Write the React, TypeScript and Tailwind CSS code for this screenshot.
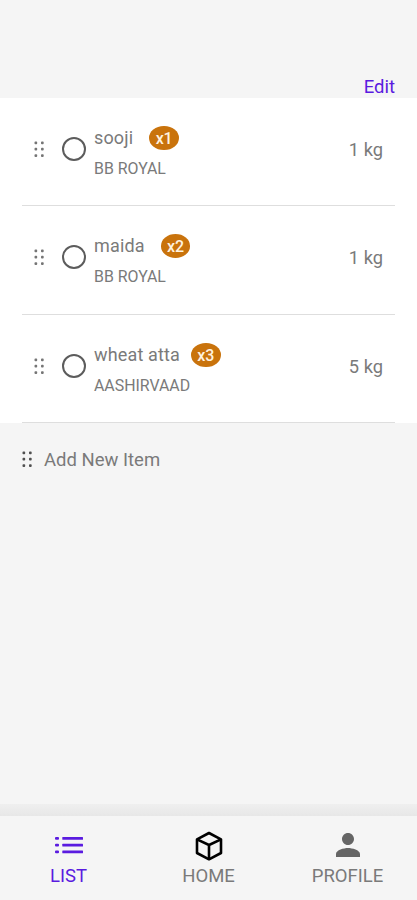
import React from "react";

interface GroceryItem {
  id: number;
  name: string;
  brand: string;
  count: number;
  quantity: string;
}

const items: GroceryItem[] = [
  { id: 1, name: "sooji", brand: "BB ROYAL", count: 1, quantity: "1 kg" },
  { id: 2, name: "maida", brand: "BB ROYAL", count: 2, quantity: "1 kg" },
  { id: 3, name: "wheat atta", brand: "AASHIRVAAD", count: 3, quantity: "5 kg" },
];

const DragHandle: React.FC<{ className?: string }> = ({ className }) => (
  <svg viewBox="0 0 12 18" className={`h-[18px] w-3 shrink-0 ${className ?? ""}`} fill="currentColor">
    {[1.5, 8].map((x) =>
      [1.5, 7.8, 14.2].map((y) => (
        <rect key={`${x}-${y}`} x={x} y={y} width="2.7" height="2.7" rx="0.9" />
      ))
    )}
  </svg>
);

const ListIcon: React.FC = () => (
  <svg viewBox="0 0 28 18" className="h-[18px] w-7" fill="currentColor">
    {[1, 7.8, 14.5].map((y) => (
      <g key={y}>
        <rect x="0" y={y} width="4" height="2.8" rx="1" />
        <rect x="7.3" y={y} width="20.7" height="2.8" rx="0.5" />
      </g>
    ))}
  </svg>
);

const BoxIcon: React.FC = () => (
  <svg
    viewBox="0 0 28 30"
    className="h-[30px] w-7"
    fill="none"
    stroke="currentColor"
    strokeWidth="2.6"
    strokeLinejoin="round"
  >
    <path d="M14 2 L26 8.3 V22 L14 28.3 L2 22 V8.3 Z" />
    <path d="M2 8.3 L14 14 L26 8.3 M14 14 V28" />
  </svg>
);

const PersonIcon: React.FC = () => (
  <svg viewBox="4 4 16 16" className="h-6 w-6" fill="currentColor">
    <path d="M12 12c2.21 0 4-1.79 4-4s-1.79-4-4-4-4 1.79-4 4 1.79 4 4 4zm0 2c-2.67 0-8 1.34-8 4v2h16v-2c0-2.66-5.33-4-8-4z" />
  </svg>
);

const ItemRow: React.FC<{ item: GroceryItem }> = ({ item }) => (
  <li className="ml-[22px] mr-[22px] flex h-[108.4px] border-b-[1.5px] border-[#dedede] pl-[11px] pr-3">
    <DragHandle className="mt-[42px] text-[#757575]" />
    <button
      aria-label={`Mark ${item.name}`}
      className="ml-[17px] mt-[39px] h-6 w-6 shrink-0 rounded-full border-[2.3px] border-[#5c5c5c]"
    />
    <div className="ml-2 mt-7">
      <div className="flex h-6 items-center">
        <span className="text-[18px] leading-6 tracking-[0.15px]">{item.name}</span>
        <span
          className={`flex h-6 w-[29.5px] items-center justify-center rounded-[50%] bg-[#c9730c] pt-[2px] text-[16px] leading-5 font-medium tracking-[-0.2px] text-[#fff3e0] ${
            item.name.length > 6 ? "ml-[11px]" : "ml-4"
          }`}
        >
          x{item.count}
        </span>
      </div>
      <p className="mt-[9px] text-[15.9px] leading-5">{item.brand}</p>
    </div>
    <span className="ml-auto mt-10 text-[18.3px] leading-6">{item.quantity}</span>
  </li>
);

const App: React.FC = () => {
  return (
    <div className="flex h-[900px] w-full flex-col bg-[#f5f5f5] font-[Roboto,sans-serif] text-[#7a7a7a]">
      <header className="flex h-[98px] items-end justify-end pr-[22px]">
        <button className="text-[18.5px] leading-[22px] text-[#5a1be0]">Edit</button>
      </header>

      <ul className="bg-white">
        {items.map((item) => (
          <ItemRow key={item.id} item={item} />
        ))}
      </ul>

      <button className="flex items-center pl-[21px] pt-[25px] text-left">
        <DragHandle className="mb-[3px] text-[#505050]" />
        <span className="ml-[11px] text-[18.5px] leading-6">Add New Item</span>
      </button>

      <div className="mt-auto h-3 bg-linear-to-b from-[#efefef] to-[#e7e7e7]" />
      <nav className="grid h-[84px] grid-cols-3 text-[18.5px]">
        <button className="flex flex-col items-center pr-[2px] text-[#5a1be0]">
          <span className="flex h-[60px] items-center pb-[2px]">
            <ListIcon />
          </span>
          <span className="-mt-3 leading-6">LIST</span>
        </button>
        <button className="flex flex-col items-center">
          <span className="flex h-[60px] items-center pb-px text-black">
            <BoxIcon />
          </span>
          <span className="-mt-3 leading-6">HOME</span>
        </button>
        <button className="flex flex-col items-center">
          <span className="flex h-[60px] items-center pb-[2px] text-[#656565]">
            <PersonIcon />
          </span>
          <span className="-mt-3 leading-6">PROFILE</span>
        </button>
      </nav>
    </div>
  );
};

export default App;
